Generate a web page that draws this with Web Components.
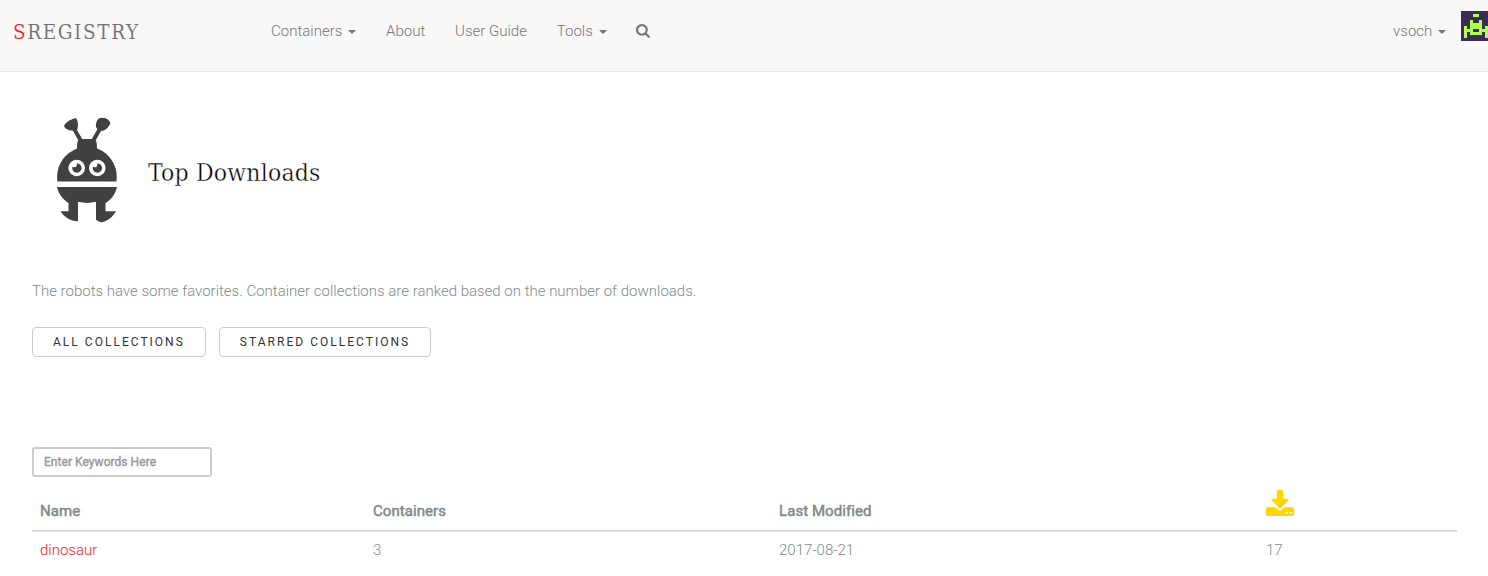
<!DOCTYPE html>
<html lang="en"><head><meta charset="utf-8"><title>Singularity Registry</title>
<style>body{margin:0;background:#fff;font:300 15px/24px Roboto,"Liberation Sans",sans-serif;color:#818a8a}</style></head>
<body><registry-page></registry-page>
<script>
const define=(name,html)=>{const t=document.createElement('template');t.innerHTML=html;customElements.define(name,class extends HTMLElement{constructor(){super();this.attachShadow({mode:'open'}).append(t.content.cloneNode(true));}});};

define('sr-brand',`<style>:host{display:block;width:258px;box-sizing:border-box;padding-left:13px;font:400 20.500px/24px "DejaVu Serif Condensed","DejaVu Serif",serif;color:#707070;letter-spacing:1.600px}span{white-space:nowrap;-webkit-text-stroke:.1px #f8f8f8}b{font-weight:400;color:#e8262a}</style><span><b>S</b>REGISTRY</span>`);
define('nav-item',`<style>:host{display:flex;align-items:center;color:#777;white-space:nowrap}:host([menu])::after{content:"";margin:2px 0 0 6px;border:4px solid transparent;border-top-color:#777;border-bottom:0}</style><slot></slot>`);
define('search-icon',`<style>:host{display:block;width:15px;height:15px}svg{display:block;width:15px;height:15px;fill:#777}</style><svg viewBox="64 128 1792 1792"><path d="M1216 832q0-185-131.5-316.5t-316.5-131.5-316.5 131.5-131.5 316.5 131.5 316.5 316.5 131.5 316.5-131.5 131.5-316.5zm512 832q0 52-38 90t-90 38q-54 0-90-38l-343-342q-179 124-399 124-143 0-273.5-55.5t-225-150-150-225-55.5-273.5 55.5-273.5 150-225 225-150 273.5-55.5 273.5 55.5 225 150 150 225 55.5 273.5q0 220-124 399l343 343q37 37 37 90z"/></svg>`);
define('user-avatar',`<style>:host{display:block;width:27px;height:30px;overflow:hidden}svg{display:block;width:30px;height:30px}</style><svg viewBox="0 0 10 10" shape-rendering="crispEdges"><path fill="#3d2c53" d="M0 0h10v10H0z"/><path fill="#b0ff4c" fill-rule="evenodd" d="M4 1h2v1H4zM3 3h1v1h2V3h1v3h1V5h1v4H8V7H7v1H3V7H2v2H1V5h1v1h1zM4 6v1h2V6z"/></svg>`);
define('nav-bar',`<style>:host{display:flex;height:71px;background:#f8f8f8;border-bottom:1px solid #e7e7e7;box-sizing:content-box;overflow:hidden}sr-brand{margin-top:20px;padding-top:0}nav{display:flex;gap:29.800px;height:24px;margin:19px 0 0 13px}search-icon{margin:5px 0 0 -.5px}.u{margin:19px 14.700px 0 auto;height:24px}user-avatar{margin-top:11px}</style><sr-brand></sr-brand><nav><nav-item menu>Containers</nav-item><nav-item>About</nav-item><nav-item>User Guide</nav-item><nav-item menu>Tools</nav-item><search-icon></search-icon></nav><nav-item class="u" menu>vsoch</nav-item><user-avatar></user-avatar>`);
define('robot-logo',`<style>:host{display:block;width:62px;height:108px}svg{display:block}</style><svg width="62" height="108" viewBox="56 116 62 108"><path d="M72.500 126l8.500 15M101.500 126l-8.500 15" stroke="#414042" stroke-width="4"/><g fill="#414042"><path d="M64 126c1-3 5-6 11.500-8 2.500 2 3 6 2 11-1 2.500-2 2.500-4.500 1.500-3.500.5-8-1.500-9-4.500zM96.500 122c1-3.500 4-5 7-4 3 0 6 2 7 5-1.300 3.300-3.300 5.800-6.300 7.300-2 1-3.500.5-6-.3-2.500-2-3-5-1.700-8z"/><path d="M77 148.500c0-4 0-7.500 2-9.500h16c2 2 1.800 5.500 2 9.500 8 3 14.500 9 17.500 17 2.500 5.500 2.400 11 2 16H57.500c-1.500-12 3-26 19.500-33z"/><path d="M57 187h60c-2 8-6 12.500-11.500 16v8.300h10.500c-3 5-7 9-14 11-2.500 0-4-1-6-2.500v-18c-6 1.500-12 1.500-18 0v19.500c-8 0-14-4.500-17.500-10H68.500V203c-5-3.500-9.500-8-11.500-16z"/></g><circle cx="76.700" cy="168" r="8.300" fill="#fff"/><circle cx="97.300" cy="168" r="8.300" fill="#fff"/><path fill="#414042" d="M77 163.300a4.700 4.700 0 1 1-4.600 3.400q2.700 1.200 3.900-.3.700-1.200.7-3.100z"/><path fill="#414042" d="M97.500 163.300a4.700 4.700 0 1 1-4.600 3.400q2.700 1.200 3.900-.3.700-1.200.7-3.100z"/></svg>`);
define('page-heading',`<style>:host{display:flex;align-items:center;gap:30px;height:108px}h1{margin:5px 0 0;font:400 24.500px/32px "DejaVu Serif Condensed","DejaVu Serif",serif;letter-spacing:.2px;color:#000;white-space:nowrap;-webkit-text-stroke:.35px #fff}</style><robot-logo></robot-logo><h1><slot></slot></h1>`);
define('outline-button',`<style>:host{display:block}button{box-sizing:border-box;height:30px;padding:0 20px;border:1px solid #ccc;border-radius:4px;background:#fff;font:400 12px/28px Roboto,sans-serif;letter-spacing:2.020px;color:#333;text-transform:uppercase;white-space:nowrap}</style><button><slot></slot></button>`);
define('keyword-filter',`<style>:host{display:block;height:30px}input{display:block;box-sizing:border-box;width:180px;height:30px;padding:0 10px;border:2px solid #ccc;border-radius:3px;background:#fff;font:400 12px Roboto,sans-serif;letter-spacing:.05px}input::placeholder{color:#999;opacity:1;-webkit-text-stroke:.4px #999}</style><input type="text" placeholder="Enter Keywords Here">`);
define('download-icon',`<style>:host{display:block;width:30px;height:26px}svg{display:block;width:28px;height:26px;fill:#ffd700}</style><svg viewBox="64 0 1664 1536"><path d="M1344 1344q0-26-19-45t-45-19-45 19-19 45 19 45 45 19 45-19 19-45zm256 0q0-26-19-45t-45-19-45 19-19 45 19 45 45 19 45-19 19-45zm128-224v320q0 40-28 68t-68 28h-1472q-40 0-68-28t-28-68v-320q0-40 28-68t68-28h465l135 136q58 56 136 56t136-56l136-136h464q40 0 68 28t28 68zm-325-569q17 41-14 70l-448 448q-18 19-45 19t-45-19l-448-448q-31-29-14-70 17-39 59-39h256v-448q0-26 19-45t45-19h256q26 0 45 19t19 45v448h256q42 0 59 39z"/></svg>`);
define('collection-table',`<style>:host{display:block;width:1425px;margin-top:13px}.row{display:grid;grid-template-columns:333px 406px 487px 1fr;padding-left:8px;box-sizing:border-box}.head{height:42px;border-bottom:2px solid #ddd;font-weight:400;letter-spacing:.07px;-webkit-text-stroke:.5px #818a8a;line-height:42px}.body{line-height:36px}a{color:#e8262a;text-decoration:none}</style><div class="row head"><span>Name</span><span>Containers</span><span>Last Modified</span><download-icon></download-icon></div><div class="row body"><a>dinosaur</a><span>3</span><span>2017-08-21</span><span>17</span></div>`);
define('registry-page',`<style>:host{display:block;height:576px;overflow:hidden}main{padding:44px 32px 0}page-heading{padding-left:24px}p{margin:55px 0 24px}.actions{display:flex;gap:13px;margin-bottom:90px}</style><nav-bar></nav-bar><main><page-heading>Top Downloads</page-heading><p>The robots have some favorites. Container collections are ranked based on the number of downloads.</p><div class="actions"><outline-button>All Collections</outline-button><outline-button>Starred Collections</outline-button></div><keyword-filter></keyword-filter><collection-table></collection-table></main>`);
</script></body></html>
